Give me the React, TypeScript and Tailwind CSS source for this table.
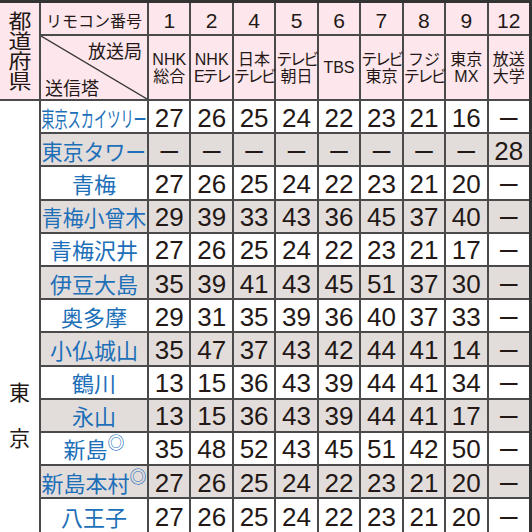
import React from 'react';

type Row = { name: string; mark?: boolean; sx?: string; gray: boolean; v: string[] };

const D = 'ー';

const rows: Row[] = [
  { name: '東京スカイツリー', sx: 'scale-x-60', gray: false, v: ['27', '26', '25', '24', '22', '23', '21', '16', D] },
  { name: '東京タワー', sx: 'scale-x-95', gray: true, v: [D, D, D, D, D, D, D, D, '28'] },
  { name: '青梅', gray: false, v: ['27', '26', '25', '24', '22', '23', '21', '20', D] },
  { name: '青梅小曾木', sx: 'scale-x-95', gray: true, v: ['29', '39', '33', '43', '36', '45', '37', '40', D] },
  { name: '青梅沢井', gray: false, v: ['27', '26', '25', '24', '22', '23', '21', '17', D] },
  { name: '伊豆大島', gray: true, v: ['35', '39', '41', '43', '45', '51', '37', '30', D] },
  { name: '奥多摩', gray: false, v: ['29', '31', '35', '39', '36', '40', '37', '33', D] },
  { name: '小仏城山', gray: true, v: ['35', '47', '37', '43', '42', '44', '41', '14', D] },
  { name: '鶴川', gray: false, v: ['13', '15', '36', '43', '39', '44', '41', '34', D] },
  { name: '永山', gray: true, v: ['13', '15', '36', '43', '39', '44', '41', '17', D] },
  { name: '新島', mark: true, gray: false, v: ['35', '48', '52', '43', '45', '51', '42', '50', D] },
  { name: '新島本村', mark: true, gray: true, v: ['27', '26', '25', '24', '22', '23', '21', '20', D] },
  { name: '八王子', gray: false, v: ['27', '26', '25', '24', '22', '23', '21', '20', D] },
];

const channels = ['1', '2', '4', '5', '6', '7', '8', '9', '12'];
const stations: string[][] = [
  ['NHK', '総合'],
  ['NHK', 'Eテレ'],
  ['日本', 'テレビ'],
  ['テレビ', '朝日'],
  ['TBS'],
  ['テレビ', '東京'],
  ['フジ', 'テレビ'],
  ['東京', 'MX'],
  ['放送', '大学'],
];

const LAT = "font-['Liberation_Sans','Noto_Sans_CJK_JP',sans-serif]";
const CJK = "font-['Noto_Sans_CJK_JP',sans-serif]";

export default function App() {
  return (
    <div className="w-[532px] h-[532px] overflow-hidden bg-white">
      <div
        className={`grid w-[532px] grid-cols-[39px_106px_repeat(9,minmax(0,1fr))] grid-rows-[31px_63px_repeat(12,31.2px)_33px] gap-[2px] bg-[#4a4a4a] border-t-[3px] border-r-[3px] border-[#333] text-[#231815] ${CJK}`}
      >
        {/* prefecture header */}
        <div className="row-span-2 bg-[#fde6ec] flex flex-col items-center justify-center">
          {['都', '道', '府', '県'].map((c) => (
            <span key={c} className="block text-[20px] leading-[20px] scale-x-115">
              {c}
            </span>
          ))}
        </div>
        <div className="bg-[#fde6ec] flex items-center justify-center text-[16px] leading-none pt-[2px]">
          リモコン番号
        </div>
        {channels.map((c) => (
          <div key={c} className={`bg-[#fde6ec] flex items-center justify-center text-[21px] leading-none pt-[4px] ${LAT}`}>
            {c}
          </div>
        ))}
        {/* diagonal cell */}
        <div className="relative bg-[#fde6ec] flex flex-col justify-between pt-[4px] pb-[2px] pl-[4px] pr-[5px]">
          <svg className="absolute inset-0 w-full h-full" viewBox="0 0 100 100" preserveAspectRatio="none">
            <line x1="0" y1="0" x2="100" y2="100" stroke="#333" strokeWidth="1.3" vectorEffect="non-scaling-stroke" />
          </svg>
          <span className="self-end text-[18px] leading-[20px]">放送局</span>
          <span className="self-start text-[18px] leading-[20px]">送信塔</span>
        </div>
        {stations.map((s, i) => (
          <div key={i} className={`bg-[#fde6ec] flex flex-col items-center justify-center text-[16px] leading-[17px] ${LAT}`}>
            {s.map((line) => (
              <span key={line} className={`block whitespace-nowrap ${line.length >= 3 && line !== 'NHK' && line !== 'TBS' ? 'tracking-[-2.5px]' : ''}`}>
                {line}
              </span>
            ))}
          </div>
        ))}
        {/* prefecture cell */}
        <div className="row-span-13 bg-white flex flex-col items-center pt-[280px] gap-[25px] text-[21px] leading-[21px]">
          <span>東</span>
          <span>京</span>
        </div>
        {rows.map((r) => (
          <React.Fragment key={r.name}>
            <div className={`${r.gray ? 'bg-[#e2dddb]' : 'bg-white'} flex items-center justify-center text-[#1d6fb8] text-[22px] leading-none whitespace-nowrap`}>
              <span className={`inline-block whitespace-nowrap ${r.sx ?? ''}`}>
                {r.name}
                {r.mark && <span className="text-[17px] align-top relative -top-[4px]">◎</span>}
              </span>
            </div>
            {r.v.map((v, j) => (
              <div
                key={j}
                className={`${r.gray ? 'bg-[#e2dddb]' : 'bg-white'} flex items-center justify-center leading-none ${v === D ? `${CJK} text-[22px]` : `${LAT} text-[26px] pt-[2px]`}`}
              >
                {v}
              </div>
            ))}
          </React.Fragment>
        ))}
      </div>
    </div>
  );
}
